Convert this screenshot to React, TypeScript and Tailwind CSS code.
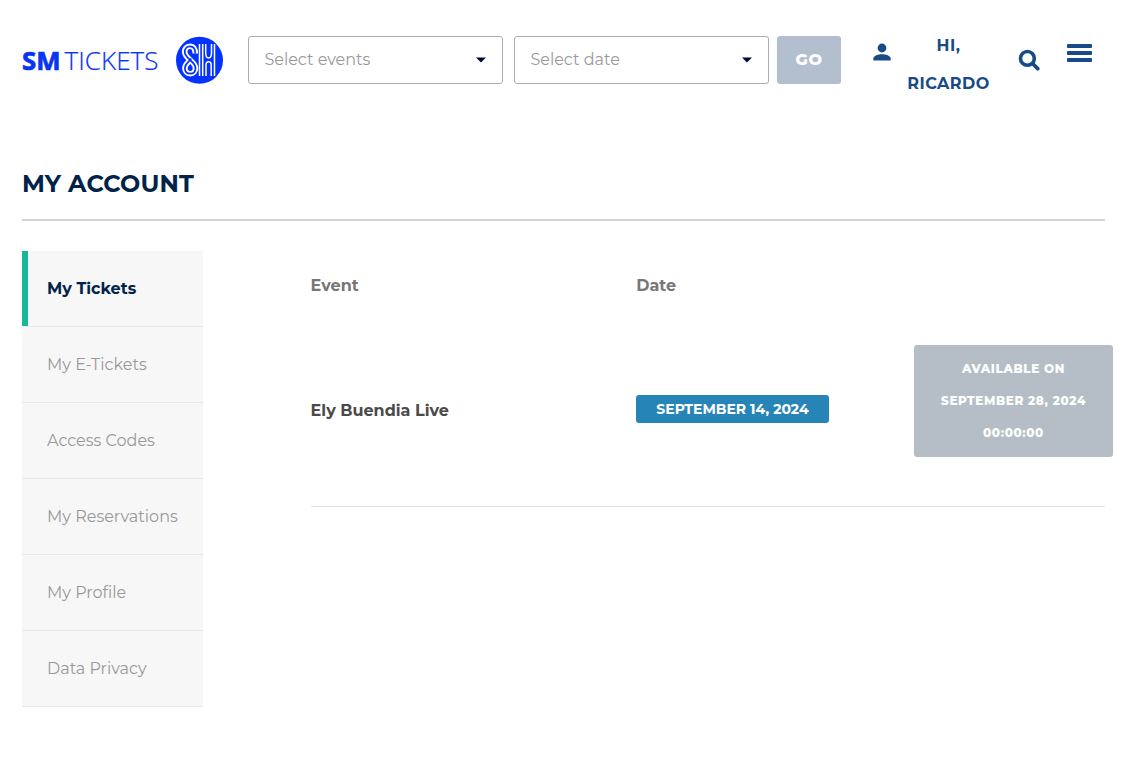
const menu = ["My E-Tickets", "Access Codes", "My Reservations", "My Profile", "Data Privacy"]

const sCurve =
  "M173.300 17.500c0-4.500-2-7.200-5.300-7.200s-5.300 2.500-5.300 5.700c0 6.500 10.800 9.500 10.800 16 0 3.500-2.200 5.700-5.300 5.700s-5.300-2.200-5.300-5.700c0-4.500 4-5.500 6.300-9.500"

function Logo() {
  return (
    <svg width="201" height="48" viewBox="0 0 201 48" className="block shrink-0">
      <text
        x="0"
        y="33.5"
        textLength="38.5"
        lengthAdjust="spacingAndGlyphs"
        className="fill-[#0a35f0] stroke-[#0a35f0] stroke-[0.7px] font-['Open_Sans',sans-serif] text-[25px] font-bold"
      >
        SM
      </text>
      <text
        x="42.5"
        y="33.5"
        textLength="94"
        lengthAdjust="spacingAndGlyphs"
        className="fill-[#0a35f0] stroke-[#0a35f0] stroke-[0.2px] font-['Open_Sans',sans-serif] text-[25px] font-light"
      >
        TICKETS
      </text>
      <circle cx="177.5" cy="24.3" r="23.5" fill="#0433ff" />
      {/* Double-line monogram: wide white strokes with a blue core */}
      <g fill="none" strokeLinejoin="round">
        <path d={sCurve} stroke="#fff" strokeWidth="5.600" />
        <path d={sCurve} stroke="#0433ff" strokeWidth="1.700" />
        <path
          d="M177.500 8v32M180.700 8v32M183.700 8v8.500q0 5.500 2.900 5.500t2.900-5.500v-8.500M184 40v-11q0-3.200 2.600-3.200t2.600 3.200v11M192.500 8v32"
          stroke="#fff"
          strokeWidth="1.500"
        />
      </g>
    </svg>
  )
}

function Select({ label }: { label: string }) {
  return (
    <button
      type="button"
      className="flex h-12 w-[255px] items-center justify-between rounded-[3px] border border-[#adadad] pr-4 pl-[15.4px] text-base text-[#999999]"
    >
      <span>{label}</span>
      <svg width="10" height="6" viewBox="0 0 10 6" className="-mt-px">
        <path d="M0 0.500h10L5 5.500z" fill="#000b35" />
      </svg>
    </button>
  )
}

export default function App() {
  return (
    <main className="h-[759px] overflow-hidden bg-white pl-[22px] font-['Montserrat','Inter',sans-serif]">
      {/* Header */}
      <header className="flex h-[164px] items-start pt-9">
        <Logo />
        <div className="ml-[25px] flex gap-[11px]">
          <Select label="Select events" />
          <Select label="Select date" />
        </div>
        <button
          type="button"
          className="ml-2 h-12 w-16 rounded-[3px] bg-[#b3bfce] text-base font-extrabold tracking-[0.6px] text-white"
        >
          GO
        </button>
        <svg width="18" height="18" viewBox="0 0 18 18" className="mt-[7px] ml-8" fill="#184a87">
          <circle cx="9" cy="5" r="4.400" />
          <path d="M0.300 17.400v-1.700c0-3 5.200-4.400 8.700-4.400s8.700 1.400 8.700 4.400v1.700z" />
        </svg>
        <div className="-mt-[9px] ml-[15px] w-[85px] text-center text-base leading-[38px] font-bold tracking-[0.5px] text-[#184a87]">
          HI,
          <br />
          RICARDO
        </div>
        <svg
          width="22"
          height="22"
          viewBox="0 0 22 22"
          className="mt-[13px] ml-[27px]"
          fill="none"
          stroke="#184a87"
        >
          <circle cx="9.400" cy="9.400" r="6.900" strokeWidth="3.600" />
          <path d="M14.500 14.500l5.200 5.200" strokeWidth="3.800" strokeLinecap="round" />
        </svg>
        <div className="mt-2 ml-[27px] flex w-[25px] flex-col gap-[3px]">
          <span className="h-1 rounded-[1px] bg-[#184a87]" />
          <span className="h-1 rounded-[1px] bg-[#184a87]" />
          <span className="h-1 rounded-[1px] bg-[#184a87]" />
        </div>
      </header>

      <div className="mr-[23px] h-[57px] border-b-2 border-[#d4d4d4]">
        <h1 className="pt-0.5 text-2xl leading-9 font-bold tracking-[0.15px] text-[#01234a]">
          MY ACCOUNT
        </h1>
      </div>

      <div className="flex pt-[30px]">
        {/* Account menu */}
        <nav className="w-[181px] shrink-0 bg-[#f7f7f7] text-base text-[#999999]">
          <div className="flex h-[75px] items-center border-l-6 border-[#18b798] pl-[19px] font-bold text-[#01234a]">
            My Tickets
          </div>
          {menu.map((label) => (
            <div
              key={label}
              className="flex h-[76px] items-center border-t border-[#e8e8e8] pl-[25px] last:h-[77px] last:border-b"
            >
              {label}
            </div>
          ))}
        </nav>

        {/* Tickets */}
        <section className="ml-[107.6px] w-[802.4px] shrink-0">
          <div className="flex pt-[23px] text-base leading-6 font-bold text-[#777777]">
            <span className="w-[325.6px]">Event</span>
            <span>Date</span>
          </div>
          <div className="mr-2 flex h-[209px] border-b border-[#e3e3e3] pt-[47px]">
            <div className="w-[325.4px] shrink-0 pt-[54px] text-base leading-6 font-bold text-[#4a4a4a]">
              Ely Buendia Live
            </div>
            <div className="mt-[50px] h-7 w-[193px] shrink-0 rounded-[3px] bg-[#2784b7] text-center text-sm leading-7 font-bold text-white">
              SEPTEMBER 14, 2024
            </div>
            <div className="ml-[85px] h-28 w-[199px] shrink-0 rounded-[3px] bg-[#b5bec6] pt-2 text-center text-xs leading-8 font-extrabold tracking-[0.6px] text-white">
              AVAILABLE ON
              <br />
              SEPTEMBER 28, 2024
              <br />
              00:00:00
            </div>
          </div>
        </section>
      </div>
    </main>
  )
}
